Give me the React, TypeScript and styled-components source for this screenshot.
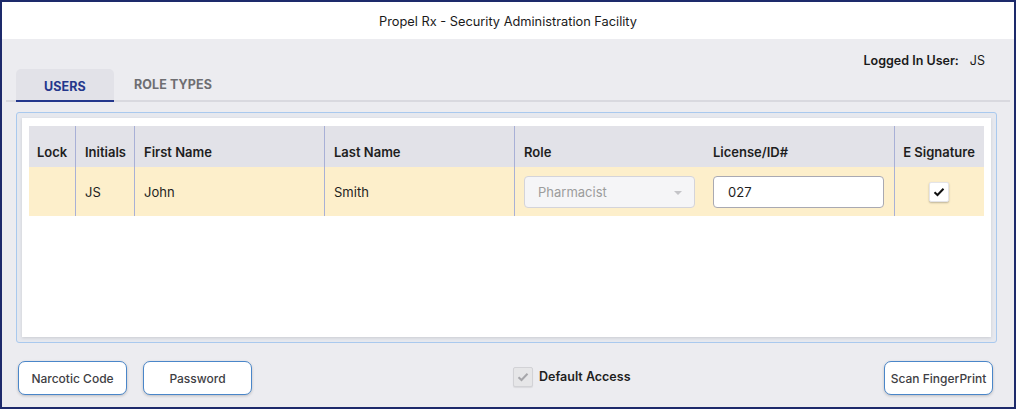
import React from "react";
import styled, { createGlobalStyle } from "styled-components";

const GlobalStyle = createGlobalStyle`
  html, body {
    margin: 0;
    padding: 0;
    background: #ffffff;
  }
  body {
    font-family: "Inter", "Roboto", "Liberation Sans", sans-serif;
    color: #222;
  }
  * {
    box-sizing: border-box;
  }
`;

const Window = styled.div`
  width: 1016px;
  height: 409px;
  border: 2px solid #1d2a6b;
  display: flex;
  flex-direction: column;
  background: #ececf0;
`;

const TitleBar = styled.div`
  height: 37px;
  background: #ffffff;
  display: flex;
  align-items: center;
  justify-content: center;
  font-size: 12.8px;
  color: #1a1a1a;
  padding-top: 1px;
`;

const Body = styled.div`
  flex: 1;
  display: flex;
  flex-direction: column;
  padding: 0 4px;
`;

const TopRow = styled.div`
  height: 63px;
  display: flex;
  justify-content: space-between;
  border-bottom: 2px solid #d9d9df;
  padding-left: 10px;
`;

const Tabs = styled.div`
  display: flex;
  align-items: flex-end;
`;

const Tab = styled.div<{ $active?: boolean }>`
  width: 98px;
  height: 33px;
  margin-bottom: -2px;
  display: flex;
  align-items: center;
  justify-content: center;
  padding-top: ${(p) => (p.$active ? "4px" : "0")};
  font-size: 12.5px;
  font-weight: 700;
  letter-spacing: 0.1px;
  border-radius: 5px 5px 0 0;
  color: ${(p) => (p.$active ? "#24378c" : "#6e6e72")};
  background: ${(p) => (p.$active ? "#e2e2e8" : "transparent")};
  border-bottom: 2px solid ${(p) => (p.$active ? "#24378c" : "transparent")};
  & + & {
    margin-left: 4px;
    width: 110px;
    padding-bottom: 1px;
  }
`;

const LoggedIn = styled.div`
  padding: 14px 25px 0 0;
  font-size: 12.5px;
  color: #1a1a1a;
  display: flex;
  gap: 11px;
  b {
    font-weight: 600;
  }
`;

const Panel = styled.div`
  margin: 10px 13px 0 10px;
  height: 231px;
  border: 1px solid #a9c9ee;
  border-radius: 3px;
  background: #e6e8ee;
  padding: 5px;
`;

const PanelInner = styled.div`
  height: 100%;
  background: #ffffff;
  box-shadow: 0 1px 3px rgba(0, 0, 0, 0.12);
  padding: 8px 7px 0 7px;
`;

const Grid = styled.div<{ $head?: boolean }>`
  display: grid;
  grid-template-columns: 47px 59px 190px 190px 190px 190px 89px;
  height: ${(p) => (p.$head ? "41px" : "49px")};
  background: ${(p) => (p.$head ? "#e2e2e8" : "#fdefcb")};
  font-size: 13px;
  font-weight: ${(p) => (p.$head ? 600 : 400)};
  color: #1e1e1e;
`;

const Cell = styled.div<{ $sep?: boolean; $center?: boolean; $pad?: number; $head?: boolean }>`
  display: flex;
  align-items: center;
  justify-content: ${(p) => (p.$center ? "center" : "flex-start")};
  padding-left: ${(p) => (p.$center ? 0 : p.$pad ?? 9)}px;
  padding-top: ${(p) => (p.$head ? "10px" : "0")};
  border-right: 1px solid ${(p) => (p.$sep ? "#a8b0d6" : "transparent")};
  white-space: nowrap;
`;

const Select = styled.div`
  width: 171px;
  height: 32px;
  border: 1px solid #d4d4da;
  border-radius: 4px;
  background: #f5f5f7;
  color: #9c9c9c;
  font-size: 13px;
  display: flex;
  align-items: center;
  justify-content: space-between;
  padding: 0 12px 0 13px;
  &::after {
    content: "";
    border-left: 4px solid transparent;
    border-right: 4px solid transparent;
    border-top: 4px solid #c4c4c8;
    margin-top: 2px;
  }
`;

const Input = styled.div`
  width: 171px;
  height: 32px;
  border: 1px solid #a9a9b2;
  border-radius: 4px;
  background: #ffffff;
  font-size: 13px;
  display: flex;
  align-items: center;
  padding-left: 14px;
  color: #1e1e1e;
`;

const Check = styled.div<{ $muted?: boolean }>`
  width: 20px;
  height: 20px;
  display: flex;
  align-items: center;
  justify-content: center;
  background: ${(p) => (p.$muted ? "#e6e6e8" : "#ffffff")};
  border: 1px solid ${(p) => (p.$muted ? "#d2d2d6" : "#e4e4e8")};
  box-shadow: ${(p) => (p.$muted ? "0 1px 1px rgba(0,0,0,0.08)" : "0 1px 2px rgba(0,0,0,0.25)")};
  border-radius: 2px;
`;

const Footer = styled.div`
  flex: 1;
  display: flex;
  align-items: center;
  padding: 6px 17px 0 12px;
`;

const Button = styled.button`
  width: 109px;
  height: 34px;
  background: #ffffff;
  border: 1.5px solid #4a86c9;
  border-radius: 7px;
  box-shadow: 0 1px 3px rgba(0, 0, 0, 0.2);
  font-family: inherit;
  font-size: 12px;
  font-weight: 500;
  color: #3e3e44;
  padding: 0;
  & + & {
    margin-left: 16px;
  }
  &:last-child {
    margin-left: auto;
  }
`;

const DefaultAccess = styled.label`
  display: flex;
  align-items: center;
  gap: 6px;
  margin-left: 261px;
  margin-top: -3px;
  font-size: 12.5px;
  font-weight: 600;
  color: #1e1e1e;
`;

const Tick = ({ color }: { color: string }) => (
  <svg width="12" height="10" viewBox="0 0 12 10">
    <path d="M1.5 5.2 L4.5 8 L10.5 1.8" fill="none" stroke={color} strokeWidth="2" />
  </svg>
);

export default function App() {
  return (
    <>
      <GlobalStyle />
      <Window>
        <TitleBar>Propel Rx - Security Administration Facility</TitleBar>
        <Body>
          <TopRow>
            <Tabs>
              <Tab $active>USERS</Tab>
              <Tab>ROLE TYPES</Tab>
            </Tabs>
            <LoggedIn>
              <b>Logged In User:</b>
              <span>JS</span>
            </LoggedIn>
          </TopRow>
          <Panel>
            <PanelInner>
              <Grid $head>
                <Cell $head $sep $pad={8}>Lock</Cell>
                <Cell $head $sep>Initials</Cell>
                <Cell $head $sep>First Name</Cell>
                <Cell $head $sep>Last Name</Cell>
                <Cell $head>Role</Cell>
                <Cell $head $sep $pad={8}>License/ID#</Cell>
                <Cell $head $center>E Signature</Cell>
              </Grid>
              <Grid>
                <Cell $sep />
                <Cell $sep>JS</Cell>
                <Cell $sep>John</Cell>
                <Cell $sep>Smith</Cell>
                <Cell>
                  <Select>Pharmacist</Select>
                </Cell>
                <Cell $sep $pad={8}>
                  <Input>027</Input>
                </Cell>
                <Cell $center>
                  <Check>
                    <Tick color="#111" />
                  </Check>
                </Cell>
              </Grid>
            </PanelInner>
          </Panel>
          <Footer>
            <Button>Narcotic Code</Button>
            <Button>Password</Button>
            <DefaultAccess>
              <Check $muted>
                <Tick color="#a6a6aa" />
              </Check>
              Default Access
            </DefaultAccess>
            <Button>Scan FingerPrint</Button>
          </Footer>
        </Body>
      </Window>
    </>
  );
}
